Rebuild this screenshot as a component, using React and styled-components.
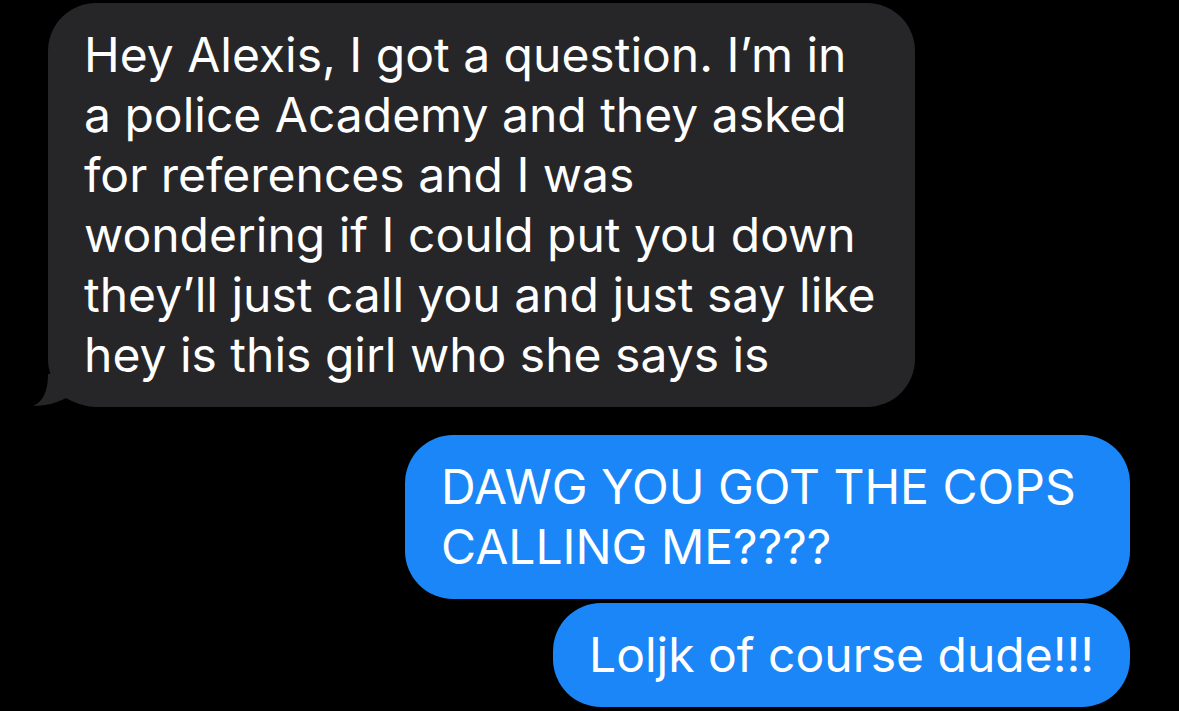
import styled, { createGlobalStyle } from "styled-components";

const PageStyles = createGlobalStyle`
    html, body {
        margin: 0;
        background: #000;
    }

    body {
        font-family: "Inter", "Liberation Sans", sans-serif;
        -webkit-font-smoothing: antialiased;
    }
`;

const Thread = styled.div`
    width: 1179px;
    height: 711px;
    box-sizing: border-box;
    padding: 3px 49px 0 48px;
    display: flex;
    flex-direction: column;
    overflow: hidden;
`;

const Bubble = styled.div`
    position: relative;
    box-sizing: border-box;
    width: ${(p) => p.$width}px;
    align-self: ${(p) => (p.$mine ? "flex-end" : "flex-start")};
    margin-top: ${(p) => p.$gap || 0}px;
    padding: 22px 36px;
    border-radius: 48px;
    background: ${(p) => (p.$mine ? "#1b86f7" : "#262629")};
    color: #fff;
    font-size: 48px;
    line-height: 60px;
    letter-spacing: 0;
`;

const Line = styled.div`
    white-space: nowrap;
`;

// iOS style tail at the bottom-left of received messages
const Tail = styled.svg`
    position: absolute;
    left: -15px;
    bottom: 0;
    width: 70px;
    height: 33px;
`;

const received = [
    "Hey Alexis, I got a question. I\u2019m in",
    "a police Academy and they asked",
    "for references and I was",
    "wondering if I could put you down",
    "they\u2019ll just call you and just say like",
    "hey is this girl who she says is",
];

export default function App() {
    return (
        <Thread>
            <PageStyles />
            <Bubble $width={867}>
                {received.map((l) => (
                    <Line key={l}>{l}</Line>
                ))}
                <Tail viewBox="33 375 70 33">
                    <path
                        d="M48 375 C48 394 42 403 33 407 C45 407 57 404 66 399 C74 404 84 407 103 407 L103 375 Z"
                        fill="#262629"
                    />
                </Tail>
            </Bubble>
            <Bubble $mine $width={725} $gap={28}>
                <Line>DAWG YOU GOT THE COPS</Line>
                <Line>CALLING ME????</Line>
            </Bubble>
            <Bubble $mine $width={577} $gap={4}>
                <Line>Loljk of course dude!!!</Line>
            </Bubble>
        </Thread>
    );
}
